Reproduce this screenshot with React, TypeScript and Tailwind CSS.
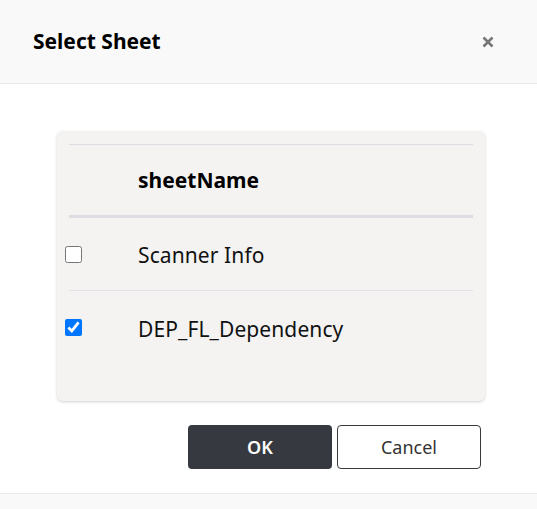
export default function App() {
  const rows = [
    { name: "Scanner Info", checked: false },
    { name: "DEP_FL_Dependency", checked: true },
  ];

  return (
    <div className="flex h-[509px] w-[537px] flex-col bg-white font-['Noto_Sans','Open_Sans',sans-serif] text-[#111]">
      <div className="flex h-[84px] items-center justify-between border-b border-[#e9e9e9] bg-[#f9f9f9] pl-[33px] pr-[43px]">
        <h2 className="text-[21px] font-bold text-black">Select Sheet</h2>
        <button className="text-[#777]" aria-label="Close">
          <svg width="12" height="12" viewBox="0 0 12 12">
            <path d="M1.5 1.5L10.5 10.5M10.5 1.5L1.5 10.5" stroke="currentColor" strokeWidth="2.6" />
          </svg>
        </button>
      </div>

      <div className="flex-1 px-[52px] pt-[47px]">
        <div className="ml-[5px] h-[270px] w-[428px] rounded-md bg-[#f4f3f2] px-3 pt-[13px] shadow-[0_1px_3px_rgba(0,0,0,0.18)]">
          <div className="border-t border-[#dcdce2]" />
          <div className="flex h-[73px] items-center border-b-[3px] border-[#dcdce2]">
            <span className="pl-[69px] pt-[2px] text-[21px] font-bold text-black">sheetName</span>
          </div>
          {rows.map((row, i) => (
            <div
              key={row.name}
              className={`flex h-[73px] items-center ${i === 0 ? "border-b border-[#dfe2e8]" : ""}`}
            >
              <input
                type="checkbox"
                defaultChecked={row.checked}
                className="-ml-[4px] h-[17px] w-[17px]"
              />
              <span className="pl-[56px] pt-[4px] text-[21px] tracking-[0.1px] text-[#111]">{row.name}</span>
            </div>
          ))}
        </div>

        <div className="mt-[24px] flex justify-end gap-[5px] pr-[4px]">
          <button className="h-[44px] w-[144px] rounded-[4px] bg-[#363a40] text-[18px] font-semibold text-white">
            OK
          </button>
          <button className="h-[44px] w-[144px] rounded-[4px] border border-[#3a3a3a] bg-white text-[18px] text-[#333]">
            Cancel
          </button>
        </div>
      </div>

      <div className="h-[16px] border-t border-[#e9e9e9] bg-[#f9f9f9]" />
    </div>
  );
}
